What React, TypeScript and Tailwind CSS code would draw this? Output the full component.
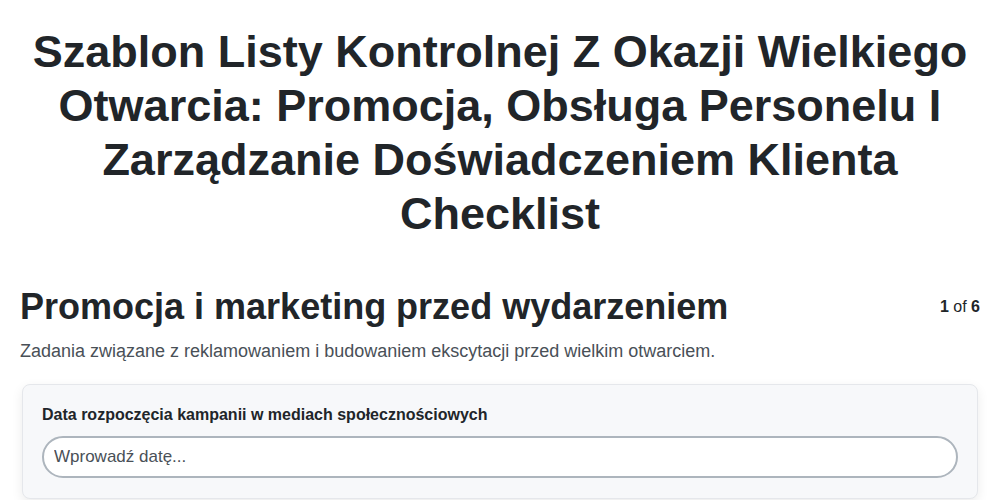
export default function App() {
  return (
    <div className="min-h-screen bg-white px-5 text-[#212529]" style={{ fontFamily: '"Liberation Sans", Arial, sans-serif' }}>
      <h1 className="pt-[25px] text-center text-[45px] font-bold leading-[54px]">
        Szablon Listy Kontrolnej Z Okazji Wielkiego Otwarcia: Promocja, Obsługa Personelu I Zarządzanie Doświadczeniem Klienta Checklist
      </h1>

      <div className="mt-[44px] flex items-center justify-between">
        <h2 className="text-[36px] font-bold leading-[44px]">Promocja i marketing przed wydarzeniem</h2>
        <div className="text-base">
          <span className="font-bold">1</span> of <span className="font-bold">6</span>
        </div>
      </div>
      <p className="mt-[8px] text-lg leading-7 text-[#495057]">
        Zadania związane z reklamowaniem i budowaniem ekscytacji przed wielkim otwarciem.
      </p>

      <div className="mx-[2px] mt-[19px] rounded-lg border border-[#e5e7eb] bg-[#f7f8fa] px-[19px] pb-5 pt-[18px] shadow-[0_4px_12px_rgba(0,0,0,0.08)]">
        <label className="block text-base font-bold leading-6">Data rozpoczęcia kampanii w mediach społecznościowych</label>
        <input
          type="text"
          placeholder="Wprowadź datę..."
          className="mt-[9px] h-[42px] w-full rounded-full border-2 border-[#adb5bd] bg-white px-[10px] text-[17px] text-[#212529] outline-none placeholder:text-[#495057]"
        />
      </div>
    </div>
  );
}
